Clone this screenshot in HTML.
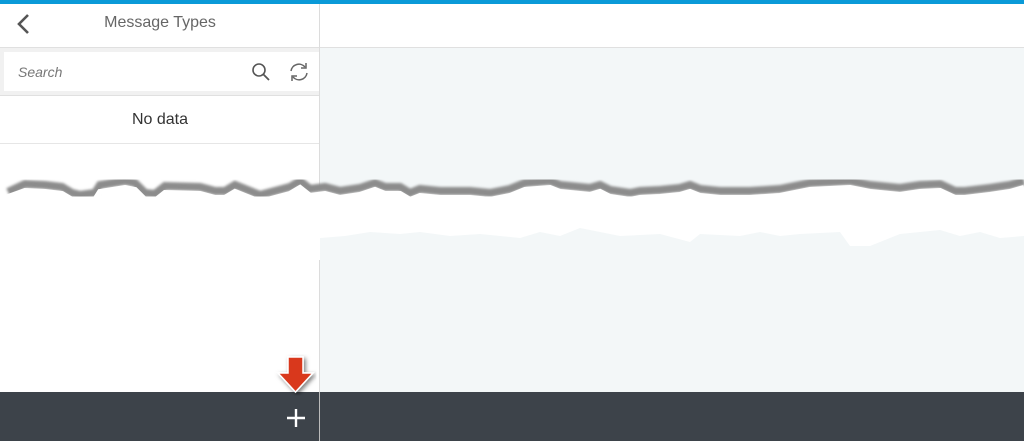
<!DOCTYPE html>
<html><head><style>
*{margin:0;padding:0;box-sizing:border-box}
body{width:1024px;height:441px;overflow:hidden;position:relative;background:#fff;font-family:"Liberation Sans",Arial,sans-serif}
.abs{position:absolute}
</style></head><body>
<div class="abs" style="left:0;top:0;width:1024px;height:4px;background:#0a9ad8"></div>
<div class="abs" style="left:320px;top:48px;width:704px;height:344px;background:#f3f7f8"></div>
<div class="abs" style="left:0;top:47px;width:1024px;height:1px;background:#e0e0e0"></div>
<div class="abs" style="left:319px;top:4px;width:1px;height:437px;background:#dcdcdc"></div>
<svg class="abs" style="left:14px;top:13px" width="20" height="22"><path d="M14 2 L5 11 L14 20" fill="none" stroke="#555" stroke-width="2.6"/></svg>
<div class="abs" style="left:0;top:14px;width:320px;text-align:center;font-size:16px;color:#666">Message Types</div>
<div class="abs" style="left:0;top:48px;width:319px;height:47px;background:#f1f1f1"></div>
<div class="abs" style="left:4px;top:52px;width:315px;height:39px;background:#fff"></div>
<div class="abs" style="left:18px;top:64px;font-size:14px;font-style:italic;color:#777">Search</div>
<svg class="abs" style="left:251px;top:62px" width="20" height="20"><circle cx="8" cy="8" r="6" fill="none" stroke="#555" stroke-width="1.6"/><path d="M12.5 12.5 L18 18" stroke="#555" stroke-width="1.8"/></svg>
<svg class="abs" style="left:288px;top:62px" width="22" height="20"><path d="M3 9 A8 8 0 0 1 17 5" fill="none" stroke="#666" stroke-width="1.5"/><path d="M18 1 L18 6 L13 6" fill="none" stroke="#666" stroke-width="1.5"/><path d="M19 11 A8 8 0 0 1 5 15" fill="none" stroke="#666" stroke-width="1.5"/><path d="M4 19 L4 14 L9 14" fill="none" stroke="#666" stroke-width="1.5"/></svg>
<div class="abs" style="left:0;top:95px;width:319px;height:1px;background:#e0e0e0"></div>
<div class="abs" style="left:0;top:111px;width:320px;text-align:center;font-size:16px;color:#333">No data</div>
<div class="abs" style="left:0;top:143px;width:319px;height:1px;background:#e6e6e6"></div>
<svg class="abs" style="left:0;top:160px" width="1024" height="100">
<defs><filter id="b"><feGaussianBlur stdDeviation="1.2"/></filter></defs>
<polygon fill="#fff" points="0,36 25,27 45,28 62,30 72,36 80,38 95,36 100,28 125,24 135,26 145,36 155,37 165,29 200,30 215,34 225,34 235,28 245,32 260,38 275,34 290,30 300,24 310,32 325,30 340,34 360,31 375,26 385,30 400,30 410,36 420,32 440,34 470,34 490,36 510,32 525,26 550,24 560,28 590,31 600,28 610,33 630,36 640,34 660,33 680,31 690,28 700,32 720,34 750,34 780,32 810,26 830,25 850,24 870,28 900,31 920,28 940,27 955,34 965,34 990,31 1010,28 1024,24 1024,76 1000,78 980,72 960,76 940,70 900,74 870,86 850,86 840,72 800,74 780,76 760,72 740,76 700,74 690,82 660,74 620,76 600,72 580,68 560,76 540,72 520,78 480,74 450,76 420,72 400,74 370,72 345,76 320,78 320,100 0,100"/>
<polyline filter="url(#b)" fill="none" stroke="#8c8c8c" stroke-width="8" points="8,32 25,24 45,25 62,27 72,33 80,35 95,33 100,25 125,21 135,23 145,33 155,34 165,26 200,27 215,31 225,31 235,25 245,29 260,35 275,31 290,27 300,21 310,29 325,27 340,31 360,28 375,23 385,27 400,27 410,33 420,29 440,31 470,31 490,33 510,29 525,23 550,21 560,25 590,28 600,25 610,30 630,33 640,31 660,30 680,28 690,25 700,29 720,31 750,31 780,29 810,23 830,22 850,21 870,25 900,28 920,25 940,24 955,31 965,31 990,28 1010,25 1024,21"/>
<polyline fill="none" stroke="#fff" stroke-width="6" points="0,40 25,31 45,32 62,34 72,40 80,42 95,40 100,32 125,28 135,30 145,40 155,41 165,33 200,34 215,38 225,38 235,32 245,36 260,42 275,38 290,34 300,28 310,36 325,34 340,38 360,35 375,30 385,34 400,34 410,40 420,36 440,38 470,38 490,40 510,36 525,30 550,28 560,32 590,35 600,32 610,37 630,40 640,38 660,37 680,35 690,32 700,36 720,38 750,38 780,36 810,30 830,29 850,28 870,32 900,35 920,32 940,31 955,38 965,38 990,35 1010,32 1024,28"/>
</svg>
<div class="abs" style="left:0;top:392px;width:1024px;height:49px;background:#3d434a"></div>
<div class="abs" style="left:319px;top:392px;width:1px;height:49px;background:#bbb"></div>
<svg class="abs" style="left:285px;top:407px" width="22" height="22"><path d="M11 2 V20 M2 11 H20" stroke="#fff" stroke-width="2.4"/></svg>
<svg class="abs" style="left:274px;top:354px" width="50" height="44"><defs><filter id="s"><feDropShadow dx="2" dy="2" stdDeviation="2" flood-opacity=".5"/></filter></defs><path d="M14 3 H29 V19 H39 L21.5 38 L4 19 H14 Z" fill="#d9371f" stroke="#fff" stroke-width="1.5" filter="url(#s)"/></svg>
</body></html>
